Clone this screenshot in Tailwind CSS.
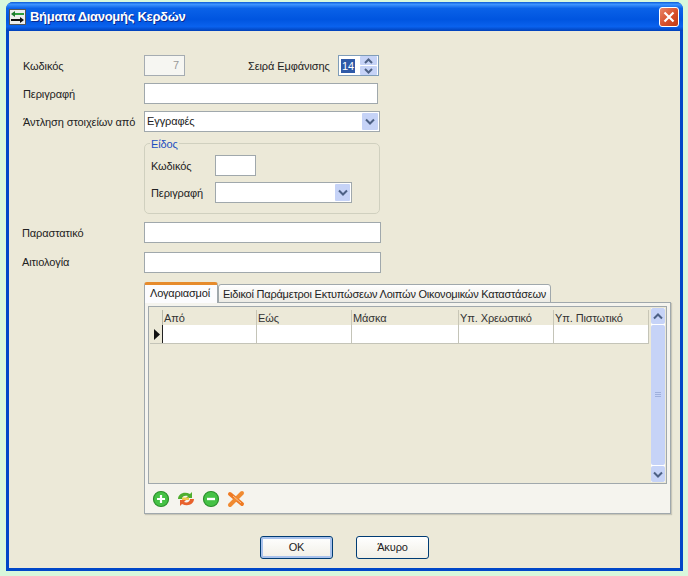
<!DOCTYPE html>
<html lang="el">
<head>
  <meta charset="UTF-8" />
  <title>Βήματα Διανομής Κερδών</title>
  <script src="https://cdn.jsdelivr.net/npm/@tailwindcss/browser@4"></script>
</head>
<body class="w-[688px] h-[576px] overflow-hidden bg-[#d8f8dc] font-['Liberation_Sans',sans-serif] text-[11px] tracking-[-0.1px] text-[#222]">

<!-- WINDOW -->
<div class="ml-[6px] mt-[2px] w-[677px] h-[569px] flex flex-col rounded-t-[7px] overflow-hidden bg-[#0047c8]">

  <!-- TITLE BAR -->
  <div class="h-[29px] shrink-0 flex items-center pl-[3px] pr-[4px] bg-[linear-gradient(180deg,#0a5ad8_0%,#3d95ff_8%,#0a62e8_22%,#0055e0_60%,#0a62ee_85%,#0040b8_100%)]">
    <div class="w-[17px] h-[16px] bg-[#eeeeee] border border-[#555] flex items-center justify-center">
      <svg width="15" height="14" viewBox="0 0 15 14"><path d="M4 4h10" stroke="#2e9e3e" stroke-width="2"/><path d="M5 1v6L1 4z" fill="#1c7a2c"/><path d="M1 10h10" stroke="#111" stroke-width="2"/><path d="M10 7v6l4-3z" fill="#111"/></svg>
    </div>
    <span class="ml-[4px] pt-px text-[13px] font-bold tracking-[-0.3px] text-white whitespace-nowrap [text-shadow:1px_1px_0_#0a2a90]">Βήματα Διανομής Κερδών</span>
    <div class="ml-auto w-[20px] h-[20px] rounded-[3px] border border-white bg-[linear-gradient(135deg,#e8876a,#d8502a_55%,#c03a14)] flex items-center justify-center">
      <svg width="12" height="12" viewBox="0 0 12 12"><path d="M1.500 1.500l9 9M10.500 1.500l-9 9" stroke="#fff" stroke-width="2.200"/></svg>
    </div>
  </div>

  <!-- BODY -->
  <div class="mx-[3px] mb-[3px] flex-1 bg-[#ece9d8] pl-[14px] pt-[24px] relative">

    <!-- Κωδικός / Σειρά -->
    <div class="flex h-[21px] items-center">
      <span class="w-[121px] pt-px">Κωδικός</span>
      <div class="w-[41px] h-[21px] border border-[#a5acb2] bg-[#f6f6f2] text-right pr-[5px] leading-[19px] text-[#9a9a9a]">7</div>
      <span class="ml-[63px] w-[90px] pt-px">Σειρά Εμφάνισης</span>
      <div class="w-[41px] h-[21px] border border-[#7f9db9] bg-white flex items-center pl-[2px] pr-[1px]">
        <span class="bg-[#2f5aa8] text-white leading-[14px] px-px">14</span>
        <div class="ml-auto w-[17px] h-[19px] flex flex-col gap-px">
          <div class="flex-1 bg-[#c6d3f7] flex items-center justify-center rounded-[1px]"><svg width="9" height="6" viewBox="0 0 9 6"><path d="M1 5l3.500-3.500L8 5" fill="none" stroke="#4d6185" stroke-width="2"/></svg></div>
          <div class="flex-1 bg-[#c6d3f7] flex items-center justify-center rounded-[1px]"><svg width="9" height="6" viewBox="0 0 9 6"><path d="M1 1l3.500 3.500L8 1" fill="none" stroke="#4d6185" stroke-width="2"/></svg></div>
        </div>
      </div>
    </div>

    <!-- Περιγραφή -->
    <div class="flex h-[21px] items-center mt-[7px]">
      <span class="w-[121px] pt-px">Περιγραφή</span>
      <div class="w-[234px] h-[21px] border border-[#a0a8ac] bg-white"></div>
    </div>

    <!-- Άντληση -->
    <div class="flex h-[21px] items-center mt-[7px]">
      <span class="w-[121px] pt-px whitespace-nowrap">Άντληση στοιχείων από</span>
      <div class="w-[236px] h-[21px] border border-[#a0a8ac] bg-white flex items-center pl-[2px] pr-[1px]">
        <span>Εγγραφές</span>
        <div class="ml-auto w-[16px] h-[17px] bg-[#c6d3f7] rounded-[1px] flex items-center justify-center"><svg width="10" height="7" viewBox="0 0 10 7"><path d="M1 1.500l4 4 4-4" fill="none" stroke="#4d6185" stroke-width="2"/></svg></div>
      </div>
    </div>

    <!-- Είδος group -->
    <div class="ml-[121px] mt-[11px] w-[236px] h-[71px] border border-[#d0d0bf] rounded-[5px] relative pl-[6px] pt-[11px]">
      <span class="absolute left-[5px] -top-[6px] bg-[#ece9d8] px-px leading-[13px] text-[#1c4fc0]">Είδος</span>
      <div class="flex h-[21px] items-center">
        <span class="w-[64px] pt-px">Κωδικός</span>
        <div class="w-[41px] h-[21px] border border-[#a0a8ac] bg-white"></div>
      </div>
      <div class="flex h-[21px] items-center mt-[6px]">
        <span class="w-[64px] pt-px">Περιγραφή</span>
        <div class="w-[137px] h-[21px] border border-[#a0a8ac] bg-white flex items-center pr-[1px]">
          <div class="ml-auto w-[15px] h-[17px] bg-[#c6d3f7] rounded-[1px] flex items-center justify-center"><svg width="10" height="7" viewBox="0 0 10 7"><path d="M1 1.500l4 4 4-4" fill="none" stroke="#4d6185" stroke-width="2"/></svg></div>
        </div>
      </div>
    </div>

    <!-- Παραστατικό -->
    <div class="flex h-[21px] items-center mt-[8px] -ml-px">
      <span class="w-[122px] pt-px">Παραστατικό</span>
      <div class="w-[237px] h-[21px] border border-[#a0a8ac] bg-white"></div>
    </div>

    <!-- Αιτιολογία -->
    <div class="flex h-[21px] items-center mt-[9px] -ml-px">
      <span class="w-[122px]">Αιτιολογία</span>
      <div class="w-[237px] h-[21px] border border-[#a0a8ac] bg-white"></div>
    </div>

    <!-- TABS -->
    <div class="ml-[121px] mt-[10px] w-[527px] h-[231px] flex flex-col">
      <div class="flex items-end h-[20px] relative z-10 -mb-px">
        <div class="w-[74px] h-[21px] bg-[#fcfcfe] border-x border-[#a0a8ac] border-t-[3px] border-t-[#e68b2c] rounded-t-[3px] pl-[5px] leading-[17px] tracking-[-0.2px] whitespace-nowrap">Λογαριασμοί</div>
        <div class="w-[333px] h-[19px] bg-[linear-gradient(180deg,#fff,#ecebe4)] border border-[#a0a8ac] rounded-t-[3px] pl-[4px] leading-[18px] tracking-[-0.22px] whitespace-nowrap">Ειδικοί Παράμετροι Εκτυπώσεων Λοιπών Οικονομικών Καταστάσεων</div>
      </div>
      <div class="flex-1 border border-[#a0a8ac] bg-[#f5f4ee] p-[3px] pb-0 flex flex-col shadow-[1px_1px_1px_#c8c6b8]">

        <!-- GRID -->
        <div class="h-[178px] shrink-0 border border-[#a0a8ac] bg-[#ece9d8] flex relative p-px">
          <div class="flex-1 flex flex-col pt-[2px]">
            <div class="flex h-[15px] leading-[17px] text-[#333]">
              <span class="w-[13px] border-r border-[#b8b8a8]"></span>
              <span class="w-[94px] border-r border-[#c8c6b6] pl-px">Από</span>
              <span class="w-[95px] border-r border-[#c8c6b6] pl-px">Εώς</span>
              <span class="w-[107px] border-r border-[#c8c6b6] pl-px">Μάσκα</span>
              <span class="w-[95px] border-r border-[#c8c6b6] pl-px">Υπ. Χρεωστικό</span>
              <span class="w-[95px] border-r border-[#c8c6b6] pl-px">Υπ. Πιστωτικό</span>
            </div>
            <div class="flex h-[19px] border-b border-[#c4c4b8]">
              <span class="w-[13px] flex items-center pl-[3px] border-r border-[#222]"><svg width="8" height="11" viewBox="0 0 8 11"><path d="M1 0l6 5.500-6 5.500z" fill="#111"/></svg></span>
              <span class="w-[94px] bg-white border-r border-[#c4c4b8]"></span>
              <span class="w-[95px] bg-white border-r border-[#c4c4b8]"></span>
              <span class="w-[107px] bg-white border-r border-[#c4c4b8]"></span>
              <span class="w-[95px] bg-white border-r border-[#c4c4b8]"></span>
              <span class="w-[95px] bg-white border-r border-[#c4c4b8]"></span>
            </div>
          </div>

          <!-- SCROLLBAR -->
          <div class="w-[16px] ml-[2px] bg-white flex flex-col">
            <div class="h-[16px] bg-[#c6d3f7] rounded-[2px] flex items-center justify-center"><svg width="10" height="7" viewBox="0 0 10 7"><path d="M1 5.500l4-4 4 4" fill="none" stroke="#4d6185" stroke-width="2"/></svg></div>
            <div class="flex-1 my-px bg-[#c6d3f7] rounded-[2px] flex items-center justify-center"><svg width="8" height="8" viewBox="0 0 8 8"><path d="M1 1.500h6M1 3.500h6M1 5.500h6" stroke="#9fb0dc"/></svg></div>
            <div class="h-[16px] bg-[#c6d3f7] rounded-[2px] flex items-center justify-center"><svg width="10" height="7" viewBox="0 0 10 7"><path d="M1 1.500l4 4 4-4" fill="none" stroke="#4d6185" stroke-width="2"/></svg></div>
          </div>
        </div>

        <!-- TOOLBAR -->
        <div class="flex items-center h-[29px] pl-[4px] gap-[7px]">
          <svg width="18" height="18" viewBox="0 0 18 18"><circle cx="9" cy="9" r="7.500" fill="#45c245" stroke="#2a8f2a" stroke-width="1.200"/><path d="M9 5v8M5 9h8" stroke="#fff" stroke-width="2.200"/></svg>
          <svg width="18" height="16" viewBox="0 0 18 16"><path d="M1 8C1 3 7 0 13 3l2-2v6H9l2-2C8 4 5 5 5 8z" fill="#4fae2f"/><path d="M17 8c0 5-6 8-12 5l-2 2V9h6l-2 2c3 1 6 0 6-3z" fill="#e8622c"/><path d="M5 6.500h7V9H5z" fill="#f2c84a"/></svg>
          <svg width="18" height="18" viewBox="0 0 18 18"><circle cx="9" cy="9" r="7.500" fill="#45c245" stroke="#2a8f2a" stroke-width="1.200"/><path d="M5 9h8" stroke="#fff" stroke-width="2.400"/></svg>
          <svg width="18" height="18" viewBox="0 0 18 18"><path d="M3 4l12 10" stroke="#ef7a22" stroke-width="4" stroke-linecap="round"/><path d="M15 3L3 15" stroke="#f08a30" stroke-width="4" stroke-linecap="round"/><path d="M6 6l8 7" stroke="#f8c090" stroke-width="1"/></svg>
        </div>
      </div>
    </div>

    <!-- BUTTONS -->
    <div class="flex ml-[237px] mt-[22px] gap-[23px]">
      <button class="w-[73px] h-[23px] rounded-[3px] border border-[#003c74] bg-[linear-gradient(180deg,#fff,#f1efe6)] shadow-[inset_0_0_0_2px_#a9c2ec] text-[11px] text-[#222]">OK</button>
      <button class="w-[73px] h-[23px] rounded-[3px] border border-[#003c74] bg-[linear-gradient(180deg,#fff,#f1efe6)] text-[11px] text-[#222]">Άκυρο</button>
    </div>
  </div>
</div>

</body>
</html>
